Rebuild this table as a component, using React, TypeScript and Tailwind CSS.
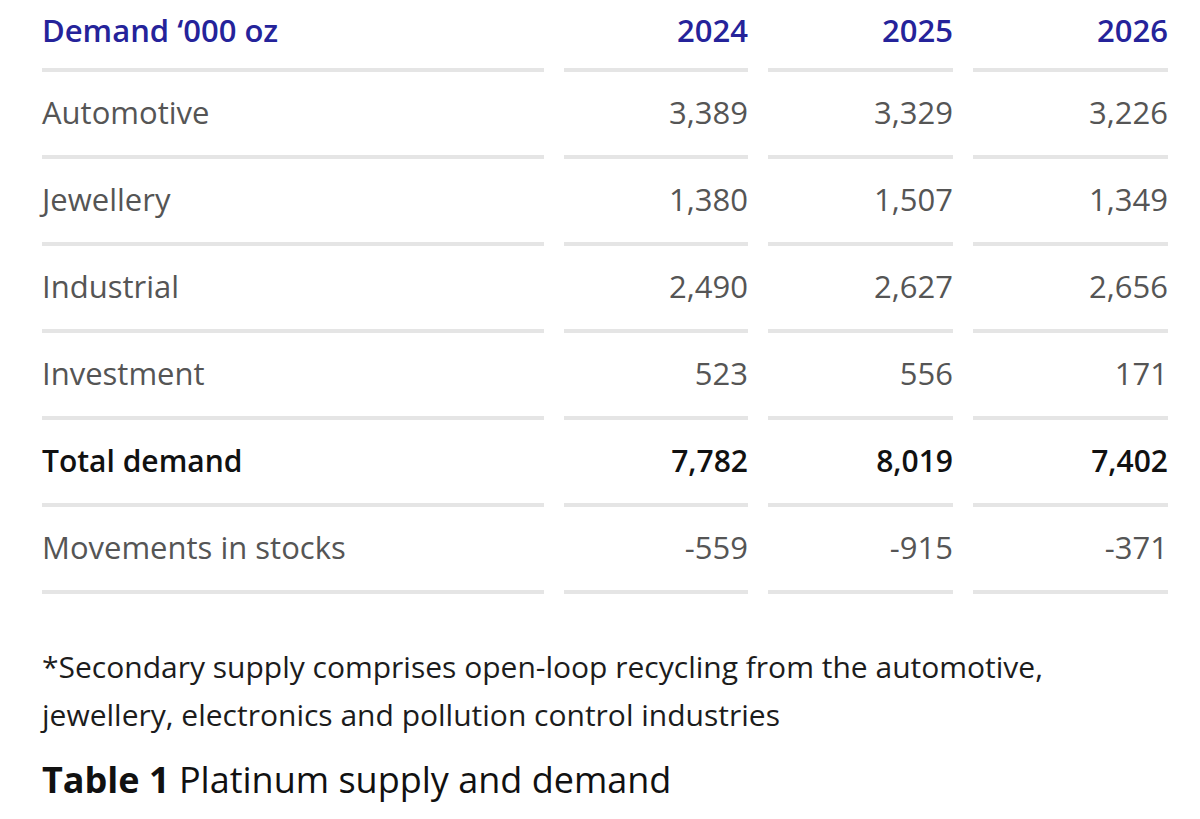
const rows = [
  { label: "Automotive", values: ["3,389", "3,329", "3,226"] },
  { label: "Jewellery", values: ["1,380", "1,507", "1,349"] },
  { label: "Industrial", values: ["2,490", "2,627", "2,656"] },
  { label: "Investment", values: ["523", "556", "171"] },
  { label: "Total demand", values: ["7,782", "8,019", "7,402"], total: true },
  { label: "Movements in stocks", values: ["-559", "-915", "-371"] },
]

const years = ["2024", "2025", "2026"]

export default function App() {
  return (
    <div className="min-h-screen w-[1200px] bg-white pl-[42px] font-['Open_Sans',sans-serif]">
      {/* Table */}
      <div className="grid grid-cols-[502px_184px_185px_195px] gap-x-5">
        <div className="flex h-[72px] items-center border-b-4 border-[#e5e5e5] pb-[8px] text-[31px] font-semibold text-[#25239a]">
          Demand ‘000 oz
        </div>
        {years.map((y) => (
          <div
            key={y}
            className="flex h-[72px] items-center justify-end border-b-4 border-[#e5e5e5] pb-[8px] text-[31px] font-semibold text-[#25239a]"
          >
            {y}
          </div>
        ))}

        {rows.map((row) => (
          <div key={row.label} className="contents">
            <div
              className={`flex h-[87px] items-center border-b-4 border-[#e5e5e5] pb-[3px] ${
                row.total ? "text-[30px] font-semibold text-[#111]" : "text-[31px] text-[#555]"
              }`}
            >
              {row.label}
            </div>
            {row.values.map((v, i) => (
              <div
                key={i}
                className={`flex h-[87px] items-center justify-end border-b-4 border-[#e5e5e5] pb-[3px] ${
                  row.total ? "text-[30px] font-semibold text-[#111]" : "text-[31px] text-[#555]"
                }`}
              >
                {v}
              </div>
            ))}
          </div>
        ))}
      </div>

      {/* Footnote */}
      <p className="mt-[49px] text-[30px] leading-[48px] text-[#1c1c1c]">
        *Secondary supply comprises open-loop recycling from the automotive,
        <br />
        jewellery, electronics and pollution control industries
      </p>

      <p className="mt-[19px] text-[36px] leading-[44px] text-[#111]">
        <span className="font-bold">Table 1</span> Platinum supply and demand
      </p>
    </div>
  )
}
